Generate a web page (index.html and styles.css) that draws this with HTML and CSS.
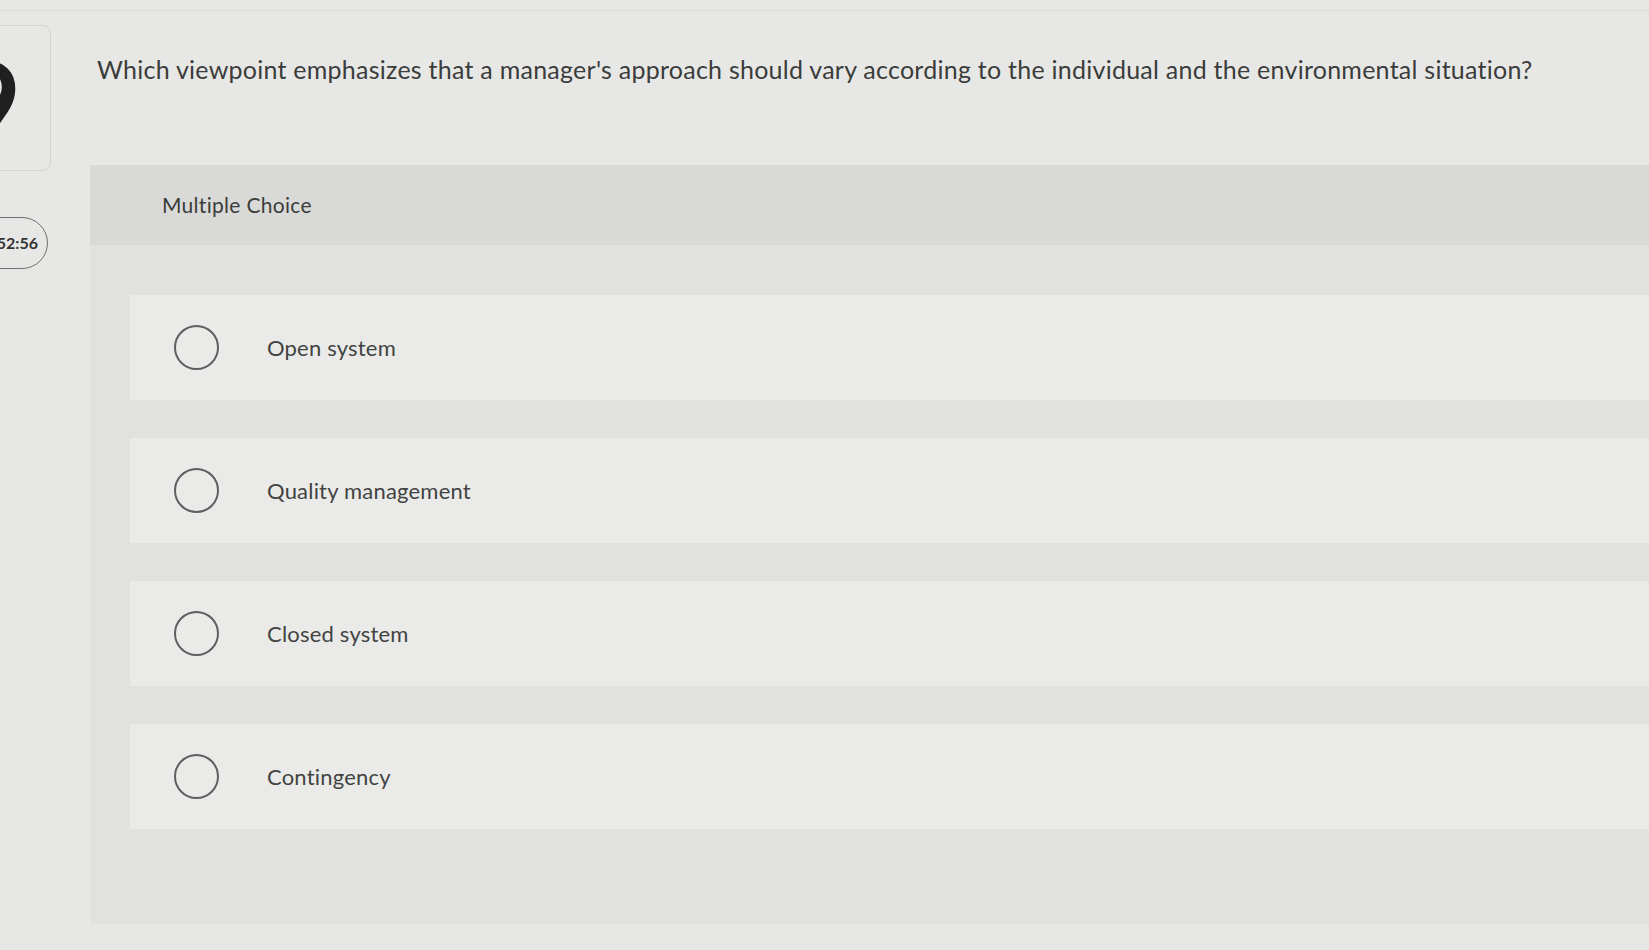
FILE: index.html
```html
<!DOCTYPE html>
<html lang="en">
<head>
    <meta charset="UTF-8">
    <meta name="viewport" content="width=device-width, initial-scale=1.0">
    <title>Question 9 - Multiple Choice</title>
    <link rel="stylesheet" href="styles.css">
</head>
<body>
    <div class="screen">
        <aside class="sidebar">
            <div class="question-number">9</div>
            <div class="timer">52:56</div>
        </aside>

        <main class="content">
            <p class="question-text">Which viewpoint emphasizes that a manager's approach should vary according to the individual and the environmental situation?</p>

            <section class="choice-panel">
                <div class="choice-header">Multiple Choice</div>

                <div class="choice-list">
                    <label class="choice-row">
                        <span class="radio"></span>
                        <span class="choice-label">Open system</span>
                    </label>
                    <label class="choice-row">
                        <span class="radio"></span>
                        <span class="choice-label">Quality management</span>
                    </label>
                    <label class="choice-row">
                        <span class="radio"></span>
                        <span class="choice-label">Closed system</span>
                    </label>
                    <label class="choice-row">
                        <span class="radio"></span>
                        <span class="choice-label">Contingency</span>
                    </label>
                </div>
            </section>
        </main>
    </div>
</body>
</html>
```

FILE: styles.css
```css
:root {
    --page-bg: #e7e8e5;
    --panel-bg: #e1e2df;
    --header-bg: #d9dad7;
    --row-bg: #eaebe8;
    --text-color: #3b3c3b;
    --muted-border: #d3d4d1;
    --radio-border: #5e5f5e;
}

body {
    margin: 0;
    font-family: Lato, "Open Sans", sans-serif;
    background-color: var(--page-bg);
    color: var(--text-color);
    overflow: hidden;
}

.screen {
    display: flex;
    min-height: 100vh;
    padding-top: 22px;
    box-sizing: border-box;
    border-top: 1px solid #dcddda;
    margin-top: 10px;
}

/* left column, partly cut off by the window edge */
.sidebar {
    width: 52px;
    flex: none;
    margin-top: -8px;
}

.question-number {
    width: 130px;
    height: 146px;
    margin-left: -79px;
    box-sizing: border-box;
    border: 1px solid var(--muted-border);
    border-radius: 8px;
    font-size: 114px;
    font-weight: 700;
    line-height: 150px;
    text-align: left;
    padding-left: 33px;
    color: #1f201f;
    overflow: hidden;
}

.timer {
    width: 110px;
    height: 52px;
    margin-left: -62px;
    margin-top: 46px;
    box-sizing: border-box;
    border: 1.5px solid #6f706f;
    border-radius: 26px;
    font-size: 16px;
    font-weight: 700;
    line-height: 49px;
    text-align: right;
    padding-right: 9px;
    color: #333;
}

.content {
    flex: 1;
    margin-left: 38px;
    min-width: 0;
}

.question-text {
    margin: 21px 0 0 7px;
    font-size: 25px;
    line-height: 31px;
    white-space: nowrap;
    letter-spacing: 0.25px;
}

.choice-panel {
    margin-top: 80px;
    width: calc(100% + 40px);
    background-color: var(--panel-bg);
    padding-bottom: 95px;
}

.choice-header {
    height: 80px;
    padding-left: 72px;
    background-color: var(--header-bg);
    font-size: 21px;
    letter-spacing: 0.3px;
    line-height: 80px;
}

.choice-list {
    display: flex;
    flex-direction: column;
    gap: 38px;
    margin-top: 50px;
    margin-left: 40px;
}

.choice-row {
    display: flex;
    align-items: center;
    height: 105px;
    padding-left: 44px;
    background-color: var(--row-bg);
    cursor: pointer;
}

.radio {
    width: 45px;
    height: 45px;
    box-sizing: border-box;
    border: 2px solid var(--radio-border);
    border-radius: 50%;
    flex: none;
}

.choice-label {
    margin-left: 48px;
    font-size: 22px;
    letter-spacing: 0.2px;
    color: #424342;
}
```
